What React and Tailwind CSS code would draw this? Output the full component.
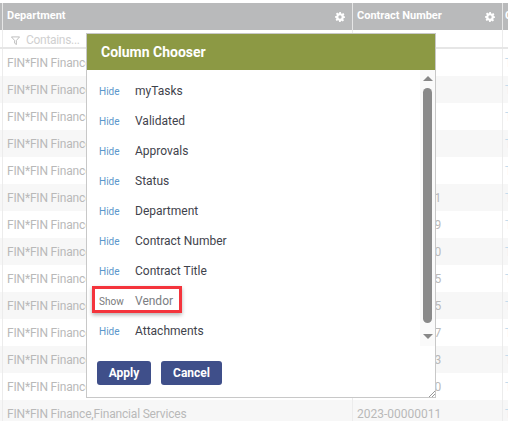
import React from 'react';

const numbers = [
  '2023-0000000', '2023-0000000', '2023-0000000', '2023-0000000', '2023-0000000',
  '2023-00000011', '2023-00000019', '2023-00000020', '2023-00000015',
  '2023-00000015', '2023-00000017', '2023-00000013', '2023-00000010', '2023-00000011',
];

const columns = [
  { name: 'myTasks', visible: true },
  { name: 'Validated', visible: true },
  { name: 'Approvals', visible: true },
  { name: 'Status', visible: true },
  { name: 'Department', visible: true },
  { name: 'Contract Number', visible: true },
  { name: 'Contract Title', visible: true },
  { name: 'Vendor', visible: false },
  { name: 'Attachments', visible: true },
];

function Gear() {
  return (
    <svg width="10" height="10" viewBox="0 0 24 24" fill="#ffffff">
      <path
        fillRule="evenodd"
        d="M10 0h4l.7 3.4 2.2.9L19.800 2.400l2.800 2.800-1.900 2.900.9 2.200L24 11v3l-3.400.7-.9 2.200 1.900 2.900-2.800 2.800-2.900-1.900-2.200.9L14 24h-4l-.7-3.400-2.200-.9-2.900 1.900-2.800-2.800 1.900-2.900-.9-2.200L0 14v-4l3.400-.7.9-2.200-1.900-2.900 2.800-2.800 2.900 1.900 2.200-.9L10 0zm2 8a4 4 0 100 8 4 4 0 000-8z"
      />
    </svg>
  );
}

function GridRow({ number, index }) {
  return (
    <div className={`flex h-[27px] items-center text-[12px] text-[#b9b9b9] ${index % 2 === 1 ? 'bg-[#f7f7f7]' : 'bg-white'}`}>
      <div className="h-full w-[3px] shrink-0 border-r border-[#ececec]" />
      <div className="flex h-full w-[350px] shrink-0 items-center overflow-hidden border-r border-[#ececec] pt-[1px] pl-[4px] tracking-[-0.18px] whitespace-nowrap">
        FIN*FIN Finance,Financial Services
      </div>
      <div className="flex h-full w-[150px] shrink-0 items-center overflow-hidden border-r border-[#ececec] pt-[1px] pl-[4px] whitespace-nowrap">
        {number}
      </div>
      <div className="overflow-hidden pl-[2px] whitespace-nowrap text-[#c4dcec]">T</div>
    </div>
  );
}

function ChooserRow({ name, visible }) {
  return (
    <div className="flex h-[30px] items-center">
      <span className={`w-[48px] pl-[12px] text-[10px] ${visible ? 'text-[#5b97cb]' : 'text-[#7a7a7a]'}`}>
        {visible ? 'Hide' : 'Show'}
      </span>
      <span className={`text-[12px] ${visible ? 'text-[#3f434c]' : 'text-[#7b7d82]'}`}>{name}</span>
    </div>
  );
}

function ColumnChooser() {
  return (
    <div className="absolute top-[33px] left-[86px] flex h-[365px] w-[350px] flex-col border border-[#c8c8c8] bg-white">
      <div className="flex h-[36px] shrink-0 items-center bg-[#8c9944] pl-[14px] text-[14px] font-bold text-white">
        Column Chooser
      </div>
      <div className="flex min-h-0 flex-1">
        <div className="flex-1 pt-[6px]">
          {columns.map((c) => (
            <ChooserRow key={c.name} name={c.name} visible={c.visible} />
          ))}
        </div>
        <div className="flex h-[276px] w-[15px] shrink-0 flex-col items-center bg-[#fafafa] pt-[6px]">
          <div className="h-0 w-0 border-r-[5px] border-b-[5px] border-l-[5px] border-r-transparent border-b-[#888888] border-l-transparent" />
          <div className="mt-[7px] h-[235px] w-[9px] shrink-0 rounded-full bg-[#8a8a8a]" />
          <div className="mt-[11px] h-0 w-0 border-t-[5px] border-r-[5px] border-l-[5px] border-t-[#888888] border-r-transparent border-l-transparent" />
        </div>
      </div>
      <div className="flex shrink-0 gap-[10px] pb-[12px] pl-[10px]">
        <button className="h-[24px] w-[54px] rounded-[3px] bg-[#3f4f8a] text-[12px] font-bold text-white">Apply</button>
        <button className="h-[24px] w-[61px] rounded-[3px] bg-[#3f4f8a] text-[12px] font-bold text-white">Cancel</button>
      </div>
      <div className="absolute top-[252px] left-[5px] h-[27px] w-[90px] border-[3px] border-[#f4343c] shadow-[0_2px_4px_rgba(0,0,0,0.3)]" />
      <svg className="absolute right-0 bottom-0" width="6" height="6" viewBox="0 0 6 6" stroke="#999999" strokeWidth="1">
        <path d="M0 6L6 0M3 6L6 3" />
      </svg>
    </div>
  );
}

export default function App() {
  return (
    <div className="relative h-[421px] w-[508px] overflow-hidden bg-white font-['Roboto',sans-serif]">
      <div className="h-[3px]" />
      <div className="flex h-[27px] bg-[#b9babb] text-[11px] font-bold text-white">
        <div className="w-[3px] shrink-0 border-r border-[#e6e6e6]" />
        <div className="flex w-[350px] shrink-0 justify-between border-r border-[#e6e6e6] pr-[7px] pl-[4px]">
          <span className="pt-[5px]">Department</span>
          <span className="pt-[9px]"><Gear /></span>
        </div>
        <div className="flex w-[150px] shrink-0 justify-between border-r border-[#e6e6e6] pr-[7px] pl-[4px]">
          <span className="pt-[5px]">Contract Number</span>
          <span className="pt-[9px]"><Gear /></span>
        </div>
        <div className="pt-[5px] pl-[2px]">C</div>
      </div>
      <div className="flex h-[19px] border-b-2 border-[#e6e6e6] text-[12px] text-[#d0d0d0]">
        <div className="w-[3px] shrink-0 border-r border-[#ececec]" />
        <div className="flex w-[350px] shrink-0 items-center gap-[6px] border-r border-[#ececec] pt-[3px] pl-[8px]">
          <svg width="9" height="9" viewBox="0 0 10 10" fill="none" stroke="#a8a8a8" strokeWidth="0.8">
            <path d="M0.500 1h9L6 5v4.500L4 8V5z" />
          </svg>
          <span className="tracking-[-0.3px]">Contains...</span>
        </div>
        <div className="w-[150px] shrink-0 border-r border-[#ececec]" />
      </div>
      {numbers.map((n, i) => (
        <GridRow key={i} number={n} index={i} />
      ))}
      <ColumnChooser />
    </div>
  );
}
